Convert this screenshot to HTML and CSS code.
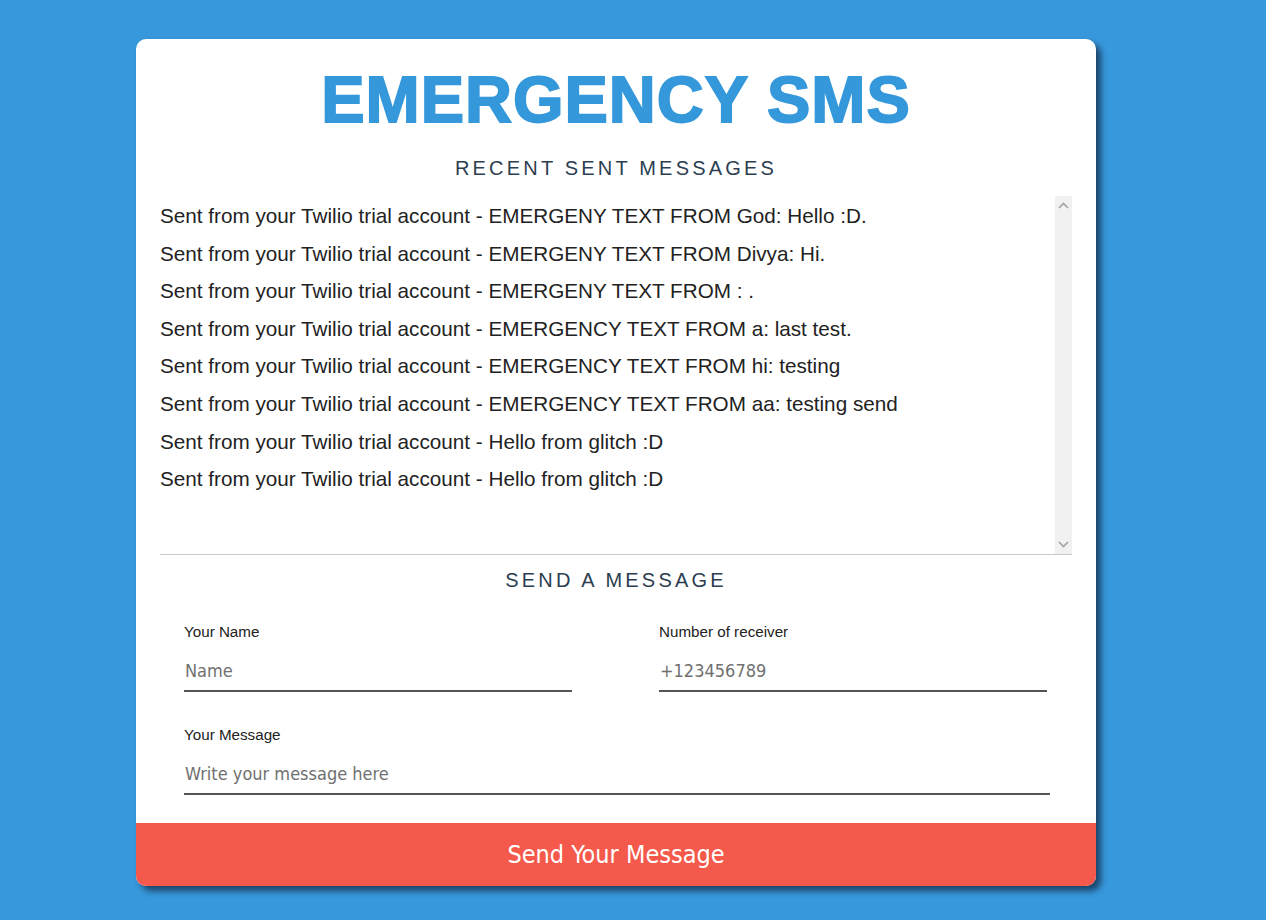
FILE: index.html
```html
<!DOCTYPE html>
<html>
<head>
<meta charset="utf-8">
<link rel="stylesheet" href="styles.css">
</head>
<body>
<div class="card">
  <h1 class="title">EMERGENCY SMS</h1>
  <h2 class="section">RECENT SENT MESSAGES</h2>
  <div class="list-box">
    <ul class="messages">
      <li>Sent from your Twilio trial account - EMERGENY TEXT FROM God: Hello :D.</li>
      <li>Sent from your Twilio trial account - EMERGENY TEXT FROM Divya: Hi.</li>
      <li>Sent from your Twilio trial account - EMERGENY TEXT FROM : .</li>
      <li>Sent from your Twilio trial account - EMERGENCY TEXT FROM a: last test.</li>
      <li>Sent from your Twilio trial account - EMERGENCY TEXT FROM hi: testing</li>
      <li>Sent from your Twilio trial account - EMERGENCY TEXT FROM aa: testing send</li>
      <li>Sent from your Twilio trial account - Hello from glitch :D</li>
      <li>Sent from your Twilio trial account - Hello from glitch :D</li>
    </ul>
    <div class="scrollbar">
      <svg width="11" height="7" viewBox="0 0 11 7"><path d="M1 6 L5.5 1.5 L10 6" fill="none" stroke="#a3a3a3" stroke-width="1.7"/></svg>
      <svg width="11" height="7" viewBox="0 0 11 7"><path d="M1 1 L5.5 5.5 L10 1" fill="none" stroke="#a3a3a3" stroke-width="1.7"/></svg>
    </div>
  </div>
  <h2 class="section send">SEND A MESSAGE</h2>
  <form class="form">
    <div class="row">
      <label class="field">
        <span class="label">Your Name</span>
        <input class="input" type="text" placeholder="Name">
      </label>
      <label class="field">
        <span class="label">Number of receiver</span>
        <input class="input" type="text" placeholder="+123456789">
      </label>
    </div>
    <label class="field full">
      <span class="label">Your Message</span>
      <input class="input" type="text" placeholder="Write your message here">
    </label>
  </form>
  <button class="send-btn" type="button">Send Your Message</button>
</div>
</body>
</html>
```
FILE: styles.css
```css
html, body {
  margin: 0;
  padding: 0;
}
body {
  background: #3798db;
  font-family: "Liberation Sans", Arial, sans-serif;
  padding: 39px 0 0 136px;
  height: 920px;
  box-sizing: border-box;
}
.card {
  width: 960px;
  background: #fff;
  border-radius: 10px;
  box-shadow: 5px 5px 6px rgba(20, 40, 70, 0.75);
  display: flex;
  flex-direction: column;
  overflow: hidden;
}
.title {
  margin: 28px 0 0;
  text-align: center;
  color: #3498db;
  font-family: "Liberation Sans", Arial, sans-serif;
  font-weight: 900;
  font-size: 65px;
  line-height: 66px;
  letter-spacing: 1px;
  -webkit-text-stroke: 1.8px #3498db;
}
.section {
  margin: 23px 0 0;
  text-align: center;
  font-weight: normal;
  font-size: 20px;
  line-height: 24px;
  letter-spacing: 3.2px;
  color: #2c3e50;
}
.list-box {
  margin: 16px 24px 0;
  height: 358px;
  display: flex;
  border-bottom: 1px solid #c8c8c8;
}
.messages {
  flex: 1;
  list-style: none;
  margin: 0;
  padding: 8px 0 0;
}
.messages li {
  font-size: 20.7px;
  line-height: 23px;
  color: #222;
  margin-bottom: 14.6px;
}
.scrollbar {
  width: 17px;
  background: #f1f1f1;
  display: flex;
  flex-direction: column;
  justify-content: space-between;
  align-items: center;
  padding: 6px 0 6px;
}
.send {
  margin-top: 13px;
}
.form {
  padding: 0 48px;
  margin-top: 32px;
  display: flex;
  flex-direction: column;
  gap: 35px;
}
.row {
  display: grid;
  grid-template-columns: 388px 388px;
  column-gap: 87px;
}
.field {
  display: flex;
  flex-direction: column;
}
.full {
  margin-right: -2px;
}
.label {
  font-size: 15.2px;
  line-height: 16px;
  color: #222;
}
.input {
  margin-top: 20px;
  border: none;
  border-bottom: 2px solid #555;
  padding: 0 0 8px 1px;
  font-family: "DejaVu Sans Condensed", "DejaVu Sans", sans-serif;
  font-size: 18px;
  line-height: 22px;
  outline: none;
  color: #333;
  background: transparent;
}
.input::placeholder {
  color: #707070;
}
.send-btn {
  margin-top: 28px;
  height: 63px;
  border: none;
  background: #f4594b;
  color: #fff;
  font-family: "DejaVu Sans Condensed", "DejaVu Sans", sans-serif;
  font-size: 25px;
  padding: 0;
  cursor: pointer;
}
```
